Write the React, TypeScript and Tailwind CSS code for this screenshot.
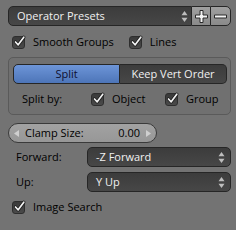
import React from 'react';

const font = { fontFamily: '"Open Sans", "DejaVu Sans", sans-serif' };

function Check({ className = '' }: { className?: string }) {
  return (
    <span className={`relative flex h-[13px] w-[13px] shrink-0 items-center justify-center rounded-[3px] border border-[#2e2e2e] bg-gradient-to-b from-[#3a3a3a] to-[#4a4a4a] ${className}`}>
      <svg width="13" height="13" viewBox="0 0 13 13" className="absolute left-[0px] top-[-2px]">
        <path d="M2.5 7 L5.2 9.8 L10.8 2.2" fill="none" stroke="#1a1a1a" strokeWidth="3.2" strokeLinecap="round" strokeLinejoin="round" />
        <path d="M2.5 7 L5.2 9.8 L10.8 2.2" fill="none" stroke="#f2f2f2" strokeWidth="1.7" strokeLinecap="round" strokeLinejoin="round" />
      </svg>
    </span>
  );
}

function UpDown() {
  return (
    <svg width="7" height="13" viewBox="0 0 7 13" className="shrink-0">
      <path d="M3.5 1 L6.5 5.2 L0.5 5.2 Z" fill="#bdbdbd" />
      <path d="M3.5 12 L6.5 7.8 L0.5 7.8 Z" fill="#bdbdbd" />
    </svg>
  );
}

function Menu({ label, className = '' }: { label: string; className?: string }) {
  return (
    <div className={`flex h-[20px] items-center justify-between rounded-[5px] border border-[#262626] bg-gradient-to-b from-[#3c3c3c] to-[#474747] pl-[8px] pr-[5px] text-[#f0f0f0] ${className}`}>
      <span>{label}</span>
      <UpDown />
    </div>
  );
}

function PlusMinus({ minus = false }: { minus?: boolean }) {
  return (
    <svg width="15" height="15" viewBox="0 0 15 15">
      {minus ? (
        <path d="M1.5 6 H13.5 V9 H1.5 Z" fill="#f4f4f4" stroke="#2a2a2a" strokeWidth="1" />
      ) : (
        <path d="M6 1.5 H9 V6 H13.5 V9 H9 V13.5 H6 V9 H1.5 V6 H6 Z" fill="#f4f4f4" stroke="#2a2a2a" strokeWidth="1" />
      )}
    </svg>
  );
}

export default function App() {
  return (
    <div className="h-[230px] w-[236px] overflow-hidden bg-[#737373] pl-[8px] pr-[5px] pt-[6px] text-[11px] text-black" style={font}>
      {/* preset row */}
      <div className="flex h-[20px]">
        <div className="flex flex-1 items-center justify-between rounded-l-[5px] border border-[#262626] bg-gradient-to-b from-[#3c3c3c] to-[#474747] pl-[8px] pr-[3px] text-[#f0f0f0]">
          <span>Operator Presets</span>
          <UpDown />
        </div>
        <div className="flex w-[18px] items-center justify-center border-y border-[#262626] bg-gradient-to-b from-[#a0a0a0] to-[#8a8a8a]">
          <PlusMinus />
        </div>
        <div className="flex w-[21px] items-center justify-center rounded-r-[5px] border border-[#262626] bg-gradient-to-b from-[#a0a0a0] to-[#8a8a8a]">
          <PlusMinus minus />
        </div>
      </div>

      <div className="mt-[9px] flex h-[14px] items-center pl-[4px]">
        <Check />
        <span className="ml-[8px]">Smooth Groups</span>
        <Check className="ml-[15px]" />
        <span className="ml-[8px]">Lines</span>
      </div>

      {/* box */}
      <div className="mt-[8px] h-[58px] rounded-[5px] border border-[#5a5a5a] bg-[#707070] pl-[4px] pr-[3px] pt-[6px]">
        <div className="flex h-[20px]">
          <div className="flex w-[107px] items-center justify-center rounded-l-[5px] border border-[#262626] bg-gradient-to-b from-[#6d95d8] to-[#4d75b8] text-[#101030]">
            Split
          </div>
          <div className="flex flex-1 items-center justify-center rounded-r-[5px] border border-l-0 border-[#262626] bg-gradient-to-b from-[#3c3c3c] to-[#474747] text-[#f0f0f0]">
            Keep Vert Order
          </div>
        </div>
        <div className="mt-[5px] flex h-[20px] items-center pl-[9px]">
          <span className="w-[69px]">Split by:</span>
          <Check />
          <span className="ml-[8px] w-[53px]">Object</span>
          <Check />
          <span className="ml-[8px]">Group</span>
        </div>
      </div>

      {/* clamp */}
      <div className="mt-[8px] flex h-[20px] w-[149px] items-center rounded-full border border-[#3a3a3a] bg-gradient-to-b from-[#a2a2a2] to-[#979797] px-[5px]">
        <svg width="5" height="7" viewBox="0 0 5 7"><path d="M0 3.5 L5 0 L5 7 Z" fill="#cfcfcf" /></svg>
        <span className="ml-[6px] flex-1">Clamp Size:</span>
        <span className="mr-[6px]">0.00</span>
        <svg width="5" height="7" viewBox="0 0 5 7"><path d="M5 3.5 L0 0 L0 7 Z" fill="#cfcfcf" /></svg>
      </div>

      <div className="mt-[4px] flex h-[20px] items-center">
        <span className="w-[79px] pl-[8px]">Forward:</span>
        <Menu label="-Z Forward" className="flex-1" />
      </div>
      <div className="mt-[5px] flex h-[20px] items-center">
        <span className="w-[79px] pl-[8px]">Up:</span>
        <Menu label="Y Up" className="flex-1" />
      </div>

      <div className="mt-[8px] flex h-[14px] items-center pl-[4px]">
        <Check />
        <span className="ml-[8px]">Image Search</span>
      </div>
    </div>
  );
}
